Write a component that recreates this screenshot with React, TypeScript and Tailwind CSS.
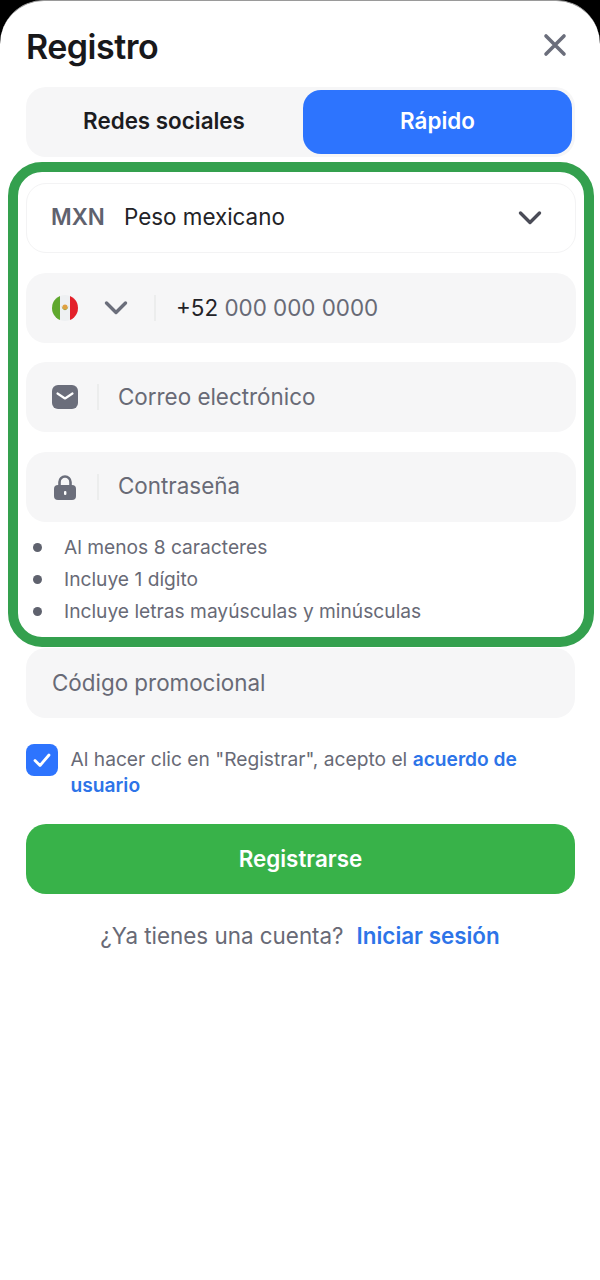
import React from "react";

const Chevron = ({ className }: { className: string }) => (
  <svg viewBox="0 0 24 16" fill="none" className={className}>
    <path d="M2.5 3 L12 12.5 L21.5 3" stroke="currentColor" strokeWidth="3.4" strokeLinecap="round" strokeLinejoin="round" />
  </svg>
);

const Flag = () => (
  <svg viewBox="0 0 26 26" className="w-[26px] h-[26px] shrink-0">
    <defs>
      <clipPath id="c"><circle cx="13" cy="13" r="13" /></clipPath>
    </defs>
    <g clipPath="url(#c)">
      <rect width="26" height="26" fill="#eef0f2" />
      <rect width="8" height="26" fill="#5fa82e" />
      <rect x="18" width="8" height="26" fill="#e3202a" />
      <path d="M9.5 11 C10.5 16.5 15.5 16.5 16.5 11 C15.5 14 10.5 14 9.5 11Z" fill="#78a848" />
      <circle cx="13" cy="12" r="2.6" fill="#e0a040" />
    </g>
  </svg>
);

const Divider = () => <div className="w-[2px] h-[26px] bg-[#eceded] shrink-0" />;

const Field = ({ children, className = "" }: { children: React.ReactNode; className?: string }) => (
  <div className={`h-[70px] rounded-[20px] bg-[#f6f6f7] flex items-center ${className}`}>{children}</div>
);

export default function App() {
  return (
    <div className="w-[600px] h-[1280px] bg-black overflow-hidden" style={{ fontFamily: "Inter, sans-serif" }}>
      <div className="h-full bg-white rounded-t-[44px] border-t border-[#9a9a9a]">
        <div className="h-[85px] pl-[26px] pr-[33px] flex items-center justify-between">
          <h1 className="text-[34px] font-semibold text-[#18181b] tracking-[-0.5px] leading-none mt-[6px]">Registro</h1>
          <svg viewBox="0 0 24 24" fill="none" className="w-[24px] h-[24px] mt-[2px] text-[#6b6e7b]">
            <path d="M3 3 L21 21 M21 3 L3 21" stroke="currentColor" strokeWidth="3.6" strokeLinecap="round" />
          </svg>
        </div>

        <div className="mt-[1px] mx-[26px] w-[549px] h-[70px] p-[3px] rounded-[20px] bg-[#f6f6f7] flex">
          <div className="w-[274px] pb-[2px] pr-[4px] flex items-center justify-center text-[22.4px] font-semibold text-[#1c1c1f]">Redes sociales</div>
          <div className="w-[269px] pb-[2px] rounded-[18px] bg-[#2d74fe] flex items-center justify-center text-[22.4px] font-semibold text-white">Rápido</div>
        </div>

        <div className="mt-[5px] mx-[8px] w-[586px] h-[485px] border-[10px] border-[#34a04e] rounded-[34px] px-[8px] pt-[11px]">
          <div className="h-[70px] rounded-[20px] border border-[#f3f3f4] flex items-center pl-[24px] pr-[33px]">
            <span className="text-[22.4px] font-semibold text-[#5f626e] w-[73px] pb-[2px]">MXN</span>
            <span className="text-[22.4px] text-[#232327] flex-1 pb-[2px]">Peso mexicano</span>
            <Chevron className="w-[24px] h-[16px] text-[#4a4c57]" />
          </div>

          <Field className="mt-[20px] pl-[26px]">
            <Flag />
            <Chevron className="w-[24px] h-[16px] ml-[26px] mr-[26px] text-[#6b6e7b]" />
            <Divider />
            <span className="ml-[20px] text-[22.4px] text-[#232327] pb-[1px]">+52 <span className="text-[#686a76]">000 000 0000</span></span>
          </Field>

          <Field className="mt-[19px] pl-[26px]">
            <svg viewBox="0 0 26 24" className="w-[26px] h-[24px] shrink-0">
              <rect width="26" height="24" rx="6" fill="#6b6e7b" />
              <path d="M5.5 8.5 L13 13.5 L20.5 8.5" stroke="#fff" strokeWidth="2.2" fill="none" strokeLinecap="round" strokeLinejoin="round" />
            </svg>
            <div className="ml-[19px]"><Divider /></div>
            <span className="ml-[19px] text-[22.4px] text-[#686a76]">Correo electrónico</span>
          </Field>

          <Field className="mt-[20px] pl-[26px]">
            <svg viewBox="0 0 26 26" className="w-[26px] h-[26px] shrink-0">
              <path d="M7.5 12 V8 a5.5 5.5 0 0 1 11 0 V12" stroke="#6b6e7b" strokeWidth="2.6" fill="none" />
              <rect x="2" y="11" width="22" height="15" rx="4" fill="#6b6e7b" />
              <rect x="12" y="17" width="2.4" height="4" rx="1" fill="#fff" />
            </svg>
            <div className="ml-[19px]"><Divider /></div>
            <span className="ml-[19px] text-[22.4px] text-[#686a76] pb-[2px]">Contraseña</span>
          </Field>

          <ul className="mt-[9px] text-[19.2px] text-[#686a76]">
            {["Al menos 8 caracteres", "Incluye 1 dígito", "Incluye letras mayúsculas y minúsculas"].map((t) => (
              <li key={t} className="h-[32px] flex items-center pl-[7px]">
                <span className="w-[9px] h-[9px] rounded-full bg-[#5f626e] mr-[22px] shrink-0" />
                {t}
              </li>
            ))}
          </ul>
        </div>

        <Field className="mt-[1px] mx-[26px] w-[549px] px-[26px]">
          <span className="text-[22.4px] text-[#686a76]">Código promocional</span>
        </Field>

        <div className="mt-[26px] mx-[26px] flex items-start">
          <div className="w-[32px] h-[32px] rounded-[8px] bg-[#2d74fe] flex items-center justify-center shrink-0">
            <svg viewBox="0 0 20 20" fill="none" className="w-[20px] h-[20px]">
              <path d="M3 10.5 L8 15.5 L17 5" stroke="#fff" strokeWidth="2.8" strokeLinecap="round" strokeLinejoin="round" />
            </svg>
          </div>
          <p className="ml-[12.5px] text-[19.2px] leading-[26px] text-[#686a76] mt-[2px]">
            Al hacer clic en "Registrar", acepto el <span className="font-semibold text-[#2d74e8]">acuerdo de usuario</span>
          </p>
        </div>

        <div className="mt-[26px] mx-[26px] w-[549px] h-[70px] rounded-[20px] bg-[#38b249] flex items-center justify-center text-[22.4px] font-semibold text-white">Registrarse</div>

        <p className="mt-[25px] text-center text-[22.4px] text-[#686a76]">
          ¿Ya tienes una cuenta?<span className="ml-[13px] font-semibold text-[#2d74e8]">Iniciar sesión</span>
        </p>
      </div>
    </div>
  );
}
